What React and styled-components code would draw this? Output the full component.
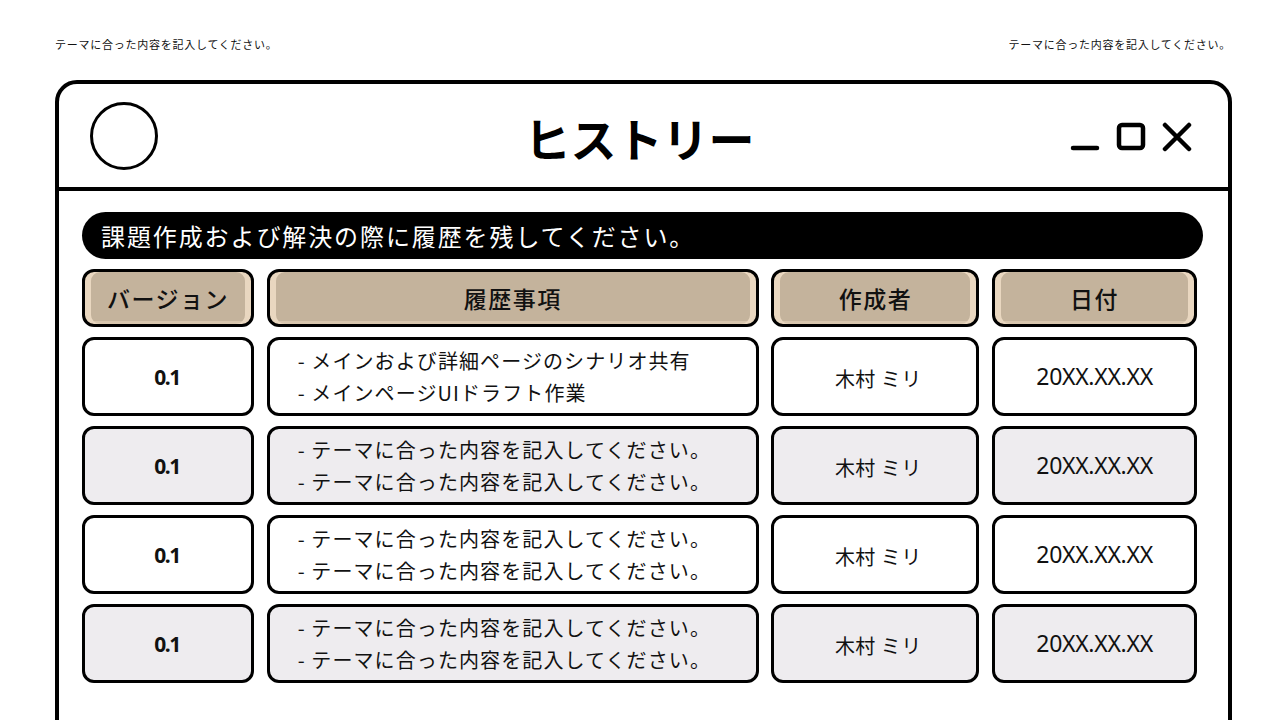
import React from 'react';
import styled, { createGlobalStyle } from 'styled-components';

const GlobalStyle = createGlobalStyle`
  html, body {
    margin: 0;
    padding: 0;
    background: #fff;
    overflow: hidden;
  }
  body {
    font-family: "Noto Sans CJK JP", "Noto Sans", sans-serif;
    color: #111;
  }
`

const Page = styled.div`
  width: 1280px;
  height: 720px;
  box-sizing: border-box;
  padding: 36px 54px 0 55px;
  overflow: hidden;
`
const Captions = styled.div`
  display: flex;
  justify-content: space-between;
  font-size: 11px;
  letter-spacing: 0.75px;
  line-height: 16px;
  height: 44px;
  margin-right: -5px;
`
const Window = styled.div`
  width: 1177px;
  height: 700px;
  box-sizing: border-box;
  border: 4px solid #000;
  border-radius: 22px;
  display: flex;
  flex-direction: column;
`
const TitleBar = styled.div`
  height: 103px;
  flex-shrink: 0;
  display: grid;
  grid-template-columns: 1fr auto 1fr;
  align-items: center;
  padding: 0 36px 0 31px;
  border-bottom: 4px solid #000;
`
const Circle = styled.div`
  width: 62px;
  height: 62px;
  border: 3.5px solid #000;
  border-radius: 50%;
  margin-top: 1px;
`
const Title = styled.h1`
  margin: 0;
  font-size: 46px;
  font-weight: 700;
  color: #000;
  line-height: 1;
  margin: 2px 0 0 -3px;
`
const Controls = styled.div`
  display: flex;
  justify-content: flex-end;
  align-items: center;
  gap: 16px;
  margin-top: 2px;
`
const Content = styled.div`
  padding: 21px 28px 0 23px;
  display: flex;
  flex-direction: column;
`
const Banner = styled.div`
  height: 47px;
  background: #000;
  color: #fff;
  border-radius: 24px;
  display: flex;
  align-items: center;
  padding-left: 19px;
  font-size: 24px;
  letter-spacing: 1.9px;
  margin-right: -3px;
`
const Table = styled.div`
  display: grid;
  grid-template-columns: 172px 492px 208px 205px;
  column-gap: 12.7px;
  row-gap: 10px;
  margin-top: 10px;
`
const HeadCell = styled.div`
  height: 58px;
  box-sizing: border-box;
  border: 3px solid #000;
  border-radius: 12px;
  background: #c4b39c;
  box-shadow: inset 6px 0 0 #e9d7c0, inset -6px 0 0 #e9d7c0, inset 0 -3px 0 #d8c6ae;
  display: flex;
  align-items: center;
  justify-content: center;
  font-size: 23px;
  font-weight: 500;
  color: #111;
  letter-spacing: 1.5px;
`
const Cell = styled.div`
  height: 79px;
  box-sizing: border-box;
  border: 3px solid #000;
  border-radius: 12px;
  background: ${p => (p.$shade ? '#eeecef' : '#fff')};
  display: flex;
  align-items: center;
  justify-content: ${p => (p.$left ? 'flex-start' : 'center')};
  padding-left: ${p => (p.$left ? '28px' : '0')};
`
const Version = styled.span`
  font-family: "Noto Sans", sans-serif;
  font-weight: 700;
  font-size: 21px;
  letter-spacing: -1.5px;
  margin-right: 2px;
`
const Lines = styled.div`
  font-size: 20px;
  letter-spacing: 1.1px;
  line-height: 32px;
  margin-top: 1px;
`
const Author = styled.span`
  font-size: 20px;
  margin: 3px 0 0 6px;
  letter-spacing: 0.5px;
`
const DateText = styled.span`
  font-family: "Noto Sans", sans-serif;
  font-size: 23px;
  letter-spacing: -0.3px;
  margin-top: -2px;
`

const rows = [
  ['- メインおよび詳細ページのシナリオ共有', '- メインページUIドラフト作業'],
  ['- テーマに合った内容を記入してください。', '- テーマに合った内容を記入してください。'],
  ['- テーマに合った内容を記入してください。', '- テーマに合った内容を記入してください。'],
  ['- テーマに合った内容を記入してください。', '- テーマに合った内容を記入してください。'],
]

const App = () => (
  <Page>
    <GlobalStyle />
    <Captions>
      <span>テーマに合った内容を記入してください。</span>
      <span>テーマに合った内容を記入してください。</span>
    </Captions>
    <Window>
      <TitleBar>
        <Circle />
        <Title>ヒストリー</Title>
        <Controls>
          <svg width="30" height="30" viewBox="0 0 30 30">
            <line x1="3" y1="26" x2="27" y2="26" stroke="#000" strokeWidth="4.5" strokeLinecap="round" />
          </svg>
          <svg width="30" height="30" viewBox="0 0 30 30">
            <rect x="3" y="3" width="24" height="23" rx="3" fill="none" stroke="#000" strokeWidth="4.5" />
          </svg>
          <svg width="30" height="30" viewBox="0 0 30 30">
            <path d="M3 3 L27 27 M27 3 L3 27" stroke="#000" strokeWidth="4.5" strokeLinecap="round" />
          </svg>
        </Controls>
      </TitleBar>
      <Content>
        <Banner>課題作成および解決の際に履歴を残してください。</Banner>
        <Table>
          <HeadCell>バージョン</HeadCell>
          <HeadCell>履歴事項</HeadCell>
          <HeadCell>作成者</HeadCell>
          <HeadCell>日付</HeadCell>
          {rows.map((lines, i) => (
            <React.Fragment key={i}>
              <Cell $shade={i % 2 === 1}><Version>0.1</Version></Cell>
              <Cell $shade={i % 2 === 1} $left>
                <Lines>
                  {lines.map((l, j) => <div key={j}>{l}</div>)}
                </Lines>
              </Cell>
              <Cell $shade={i % 2 === 1}><Author>木村 ミリ</Author></Cell>
              <Cell $shade={i % 2 === 1}><DateText>20XX.XX.XX</DateText></Cell>
            </React.Fragment>
          ))}
        </Table>
      </Content>
    </Window>
  </Page>
)

export default App;
